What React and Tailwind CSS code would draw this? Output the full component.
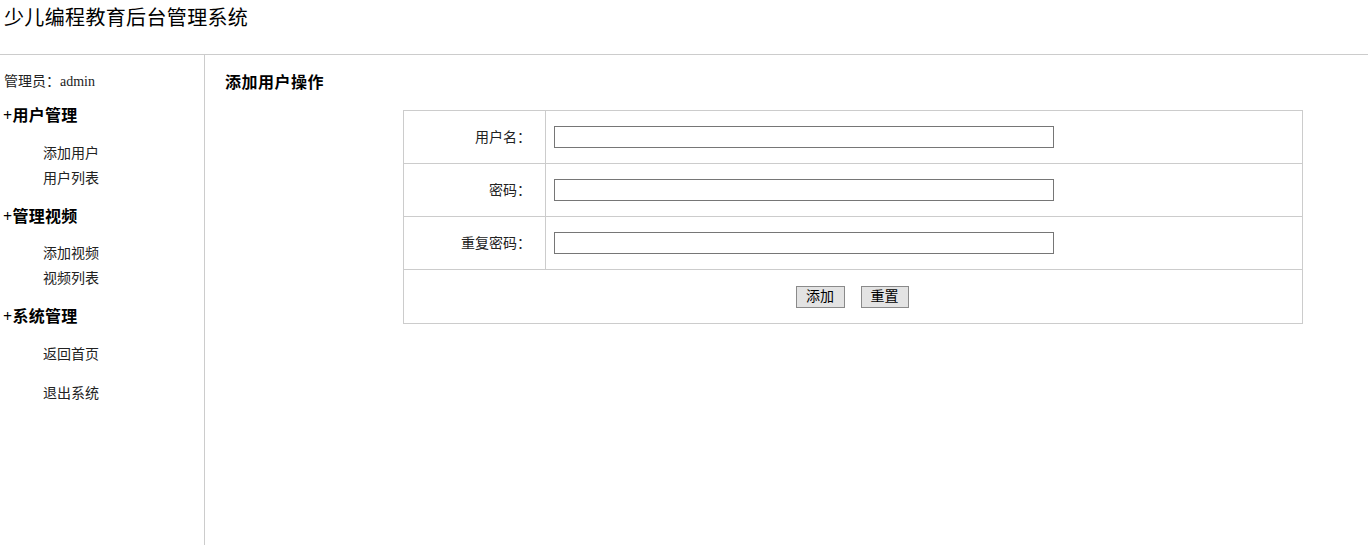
import React from "react";

const cjk = { fontFamily: '"Liberation Serif", "Noto Sans CJK SC", serif' };

function SubItem({ children, className = "" }) {
  return (
    <div className={"h-[25px] leading-[25px] pl-[43px] text-[14px] text-[#222] " + className}>
      {children}
    </div>
  );
}

function Heading({ children, className = "" }) {
  return (
    <div className={"h-[20px] leading-[20px] pl-[3px] text-[16px] font-bold text-black tracking-[0.3px] " + className}>
      {children}
    </div>
  );
}

function Row({ label }) {
  return (
    <tr className="h-[53px]">
      <td className="w-[142px] border border-[#cccccc] text-right pr-[14px] text-[14px] text-[#222] align-middle">
        {label}
      </td>
      <td className="border border-[#cccccc] pl-[8px] align-middle">
        <input
          type="text"
          className="block w-[500px] h-[22px] border border-[#767676] bg-white outline-none"
        />
      </td>
    </tr>
  );
}

export default function App() {
  return (
    <div className="w-[1368px] h-[545px] bg-white text-black overflow-hidden" style={cjk}>
      <div className="h-[55px] border-b border-[#cccccc] pl-[4px] pt-[6px]">
        <div className="text-[20px] leading-[24px] text-black tracking-[0.35px]">少儿编程教育后台管理系统</div>
      </div>
      <div className="flex h-[490px]">
        <div className="w-[205px] shrink-0 border-r border-[#cccccc]">
          <div className="pt-[18px] pl-[4px] h-[36px] leading-[18px] text-[14px] text-[#222]">
            管理员：admin
          </div>
          <Heading className="mt-[15px]">+用户管理</Heading>
          <SubItem className="mt-[15px]">添加用户</SubItem>
          <SubItem>用户列表</SubItem>
          <Heading className="mt-[16px]">+管理视频</Heading>
          <SubItem className="mt-[14px]">添加视频</SubItem>
          <SubItem>视频列表</SubItem>
          <Heading className="mt-[16px]">+系统管理</Heading>
          <SubItem className="mt-[15px]">返回首页</SubItem>
          <SubItem className="mt-[14px]">退出系统</SubItem>
        </div>
        <div className="flex-1 pl-[20px] pt-[18px]">
          <div className="h-[20px] leading-[20px] text-[16px] font-bold tracking-[0.5px]">添加用户操作</div>
          <table className="mt-[17px] ml-[178px] w-[900px] border-collapse border border-[#cccccc]">
            <tbody>
              <Row label="用户名：" />
              <Row label="密码：" />
              <Row label="重复密码：" />
              <tr className="h-[54px]">
                <td colSpan={2} className="border border-[#cccccc] align-middle">
                  <div className="flex justify-center gap-[16px] pr-[2px]">
                    <button className="w-[49px] h-[22px] border border-[#8a8a8a] bg-[#e3e3e3] text-[14px] leading-[20px] text-black">
                      添加
                    </button>
                    <button className="w-[48px] h-[22px] border border-[#8a8a8a] bg-[#e3e3e3] text-[14px] leading-[20px] text-black">
                      重置
                    </button>
                  </div>
                </td>
              </tr>
            </tbody>
          </table>
        </div>
      </div>
    </div>
  );
}
